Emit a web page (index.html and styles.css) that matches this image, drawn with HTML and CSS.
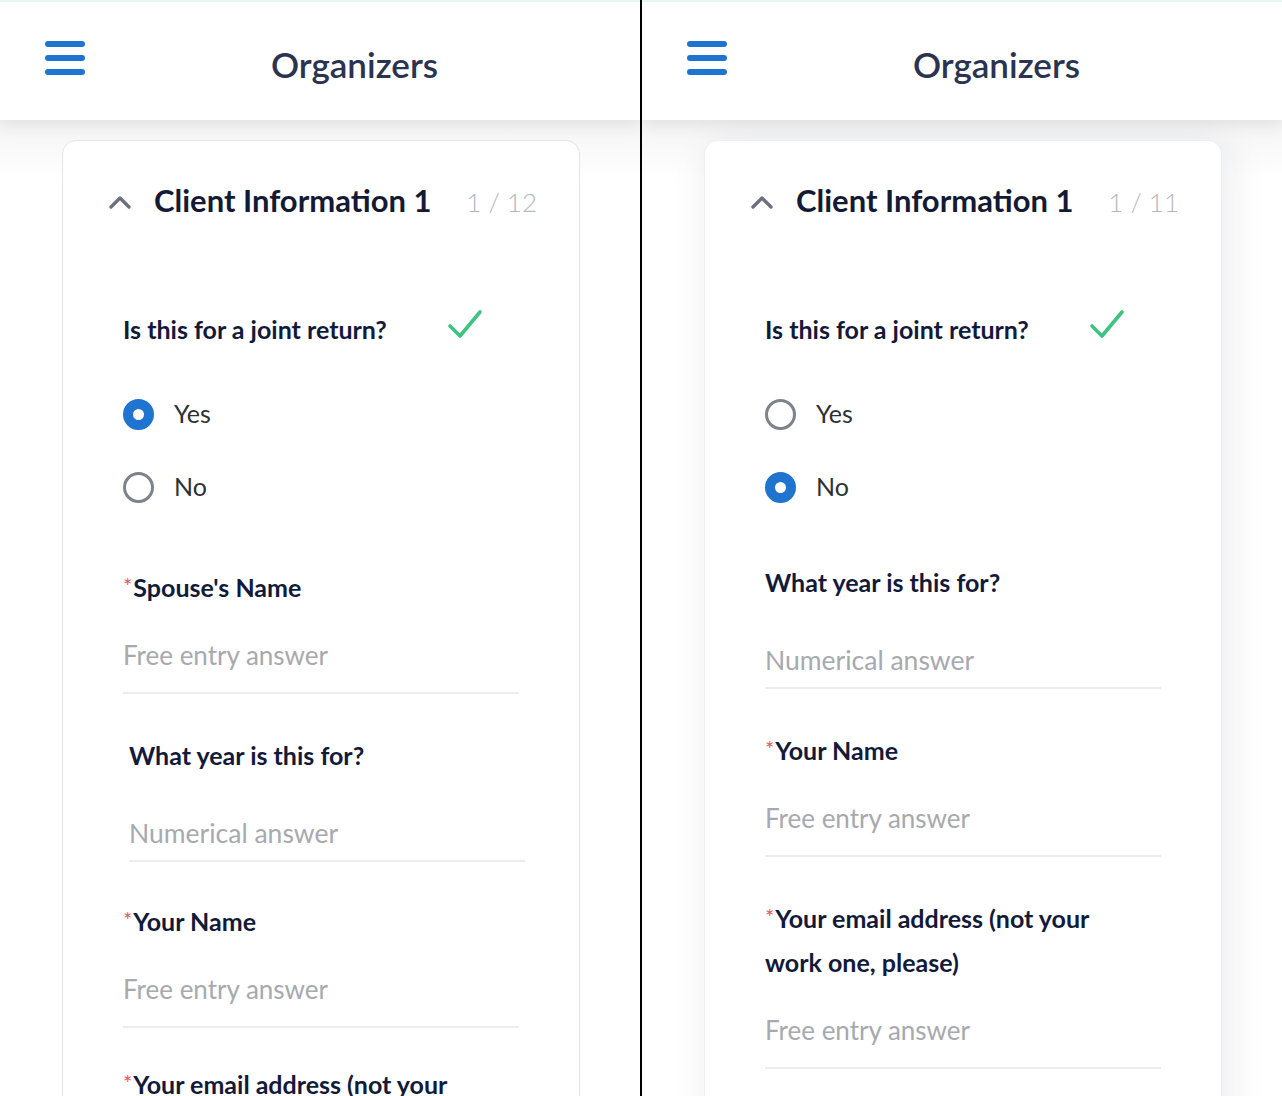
FILE: index.html
```html
<!DOCTYPE html>
<html lang="en">
<head>
<meta charset="utf-8">
<title>Organizers</title>
<link rel="stylesheet" href="styles.css">
</head>
<body>
<div class="screens">
  <section class="phone">
    <header class="topbar">
      <div class="burger"><span></span><span></span><span></span></div>
      <h1 class="title">Organizers</h1>
    </header>
    <div class="content">
      <div class="card">
        <div class="card-head">
          <svg class="chev" width="24" height="14" viewBox="0 0 24 14"><path d="M3 12 L12 3 L21 12" fill="none" stroke="#6c717d" stroke-width="3.4" stroke-linecap="round" stroke-linejoin="round"/></svg>
          <h2 class="card-title">Client Information 1</h2>
          <span class="counter">1 / 12</span>
        </div>
        <div class="question">
          <span class="q-text">Is this for a joint return?</span>
          <svg class="check" width="36" height="32" viewBox="0 0 36 32"><path d="M3 18 L13 28 L33 4" fill="none" stroke="#3ec47e" stroke-width="3.6" stroke-linecap="round" stroke-linejoin="round"/></svg>
        </div>
        <div class="radios">
          <label class="radio"><span class="dot on"></span><span>Yes</span></label>
          <label class="radio"><span class="dot"></span><span>No</span></label>
        </div>
        <div class="field first-l">
          <div class="label"><span class="req">*</span>Spouse's Name</div>
          <div class="input">Free entry answer</div>
        </div>
        <div class="field num shifted m39">
          <div class="label">What year is this for?</div>
          <div class="input">Numerical answer</div>
        </div>
        <div class="field m37">
          <div class="label"><span class="req">*</span>Your Name</div>
          <div class="input">Free entry answer</div>
        </div>
        <div class="field m34">
          <div class="label"><span class="req">*</span>Your email address (not your work one, please)</div>
          <div class="input">Free entry answer</div>
        </div>
      </div>
    </div>
  </section>
  <div class="divider"></div>
  <section class="phone">
    <header class="topbar">
      <div class="burger"><span></span><span></span><span></span></div>
      <h1 class="title">Organizers</h1>
    </header>
    <div class="content">
      <div class="card raised">
        <div class="card-head">
          <svg class="chev" width="24" height="14" viewBox="0 0 24 14"><path d="M3 12 L12 3 L21 12" fill="none" stroke="#6c717d" stroke-width="3.4" stroke-linecap="round" stroke-linejoin="round"/></svg>
          <h2 class="card-title">Client Information 1</h2>
          <span class="counter">1 / 11</span>
        </div>
        <div class="question">
          <span class="q-text">Is this for a joint return?</span>
          <svg class="check" width="36" height="32" viewBox="0 0 36 32"><path d="M3 18 L13 28 L33 4" fill="none" stroke="#3ec47e" stroke-width="3.6" stroke-linecap="round" stroke-linejoin="round"/></svg>
        </div>
        <div class="radios">
          <label class="radio"><span class="dot"></span><span>Yes</span></label>
          <label class="radio"><span class="dot on"></span><span>No</span></label>
        </div>
        <div class="field num first-r">
          <div class="label">What year is this for?</div>
          <div class="input">Numerical answer</div>
        </div>
        <div class="field m39">
          <div class="label"><span class="req">*</span>Your Name</div>
          <div class="input">Free entry answer</div>
        </div>
        <div class="field m39">
          <div class="label"><span class="req">*</span>Your email address (not your work one, please)</div>
          <div class="input">Free entry answer</div>
        </div>
      </div>
    </div>
  </section>
</div>
</body>
</html>
```
FILE: styles.css
```css
* { box-sizing: border-box; }
html, body { margin: 0; padding: 0; background: #fff; }
body {
  font-family: Lato, "Open Sans", "Liberation Sans", sans-serif;
  width: 1282px;
  height: 1096px;
  overflow: hidden;
}
.screens { display: flex; height: 1096px; }
.phone {
  width: 640px;
  height: 1096px;
  overflow: hidden;
  display: flex;
  flex-direction: column;
  background: #fff;
}
.divider { width: 2px; background: #000; flex: none; }
.topbar {
  height: 120px;
  flex: none;
  display: flex;
  align-items: center;
  padding-left: 45px;
  padding-right: 16px;
  background: #fff;
  border-top: 2px solid #e3f8ef;
  box-shadow: 0 6px 14px rgba(0, 0, 0, 0.07);
  position: relative;
  z-index: 2;
}
.burger {
  width: 40px;
  display: flex;
  flex-direction: column;
  gap: 8px;
  margin-top: -6px;
}
.burger span {
  display: block;
  height: 6px;
  border-radius: 3px;
  background: #1f74cf;
}
.title {
  flex: 1;
  margin: 0;
  text-align: center;
  font-size: 35px;
  font-weight: 600;
  color: #2b3350;
  line-height: 40px;
  margin-top: 6px;
}
.content {
  flex: 1;
  padding: 20px 0 0 62px;
  background: linear-gradient(#f4f4f5, #fff 60px);
}
.card {
  width: 518px;
  height: 1000px;
  background: #fff;
  border: 1.5px solid #e2e4e9;
  border-radius: 14px;
  padding: 40px 42px 0 60px;
}
.card.raised {
  border-color: #eceef2;
  box-shadow: 6px 6px 40px rgba(20, 30, 60, 0.09);
}
.card-head {
  display: flex;
  align-items: center;
  height: 40px;
  margin-left: -15px;
}
.chev { flex: none; margin-right: 22px; margin-top: 2px; }
.card-title {
  margin: 0;
  flex: 1;
  font-size: 31px;
  font-weight: 700;
  color: #141a33;
  line-height: 40px;
  margin-top: -2px;
}
.counter {
  font-size: 26px;
  font-weight: 300;
  color: #b4b6bc;
  margin-top: 2px;
}
.question {
  margin-top: 89px;
  height: 40px;
  display: flex;
  align-items: center;
  gap: 60px;
}
.q-text, .label {
  font-size: 25px;
  font-weight: 700;
  color: #131a39;
}
.q-text { margin-top: -2px; }
.check { margin-top: -12px; }
.radios {
  margin-top: 44px;
  display: flex;
  flex-direction: column;
  gap: 33px;
}
.radio {
  display: flex;
  align-items: center;
  height: 40px;
  gap: 20px;
  font-size: 25px;
  color: #2f3036;
}
.radio span:last-child { margin-top: -2px; }
.dot {
  width: 31px;
  height: 31px;
  border-radius: 50%;
  border: 3px solid #7e838b;
  flex: none;
}
.dot.on {
  border: 10px solid #1f74cf;
  background: #fff;
}
.field { width: 396px; }
.field.first-l { margin-top: 58px; }
.field.first-r { margin-top: 53px; }
.field.m39 { margin-top: 39px; }
.field.m37 { margin-top: 37px; }
.field.m34 { margin-top: 34px; }
.field.shifted { margin-left: 6px; }
.label { line-height: 44px; max-width: 345px; }
.req {
  color: #e05a5a;
  font-size: 22px;
  font-weight: 400;
  line-height: 0;
  vertical-align: 3px;
  margin-right: 1px;
}
.input {
  margin-top: 26px;
  line-height: 40px;
  padding-bottom: 17px;
  border-bottom: 2px solid #ececee;
  font-size: 26px;
  color: #a7a9ae;
}
.field.num .input { margin-top: 36px; padding-bottom: 7px; font-size: 26.5px; }
```
